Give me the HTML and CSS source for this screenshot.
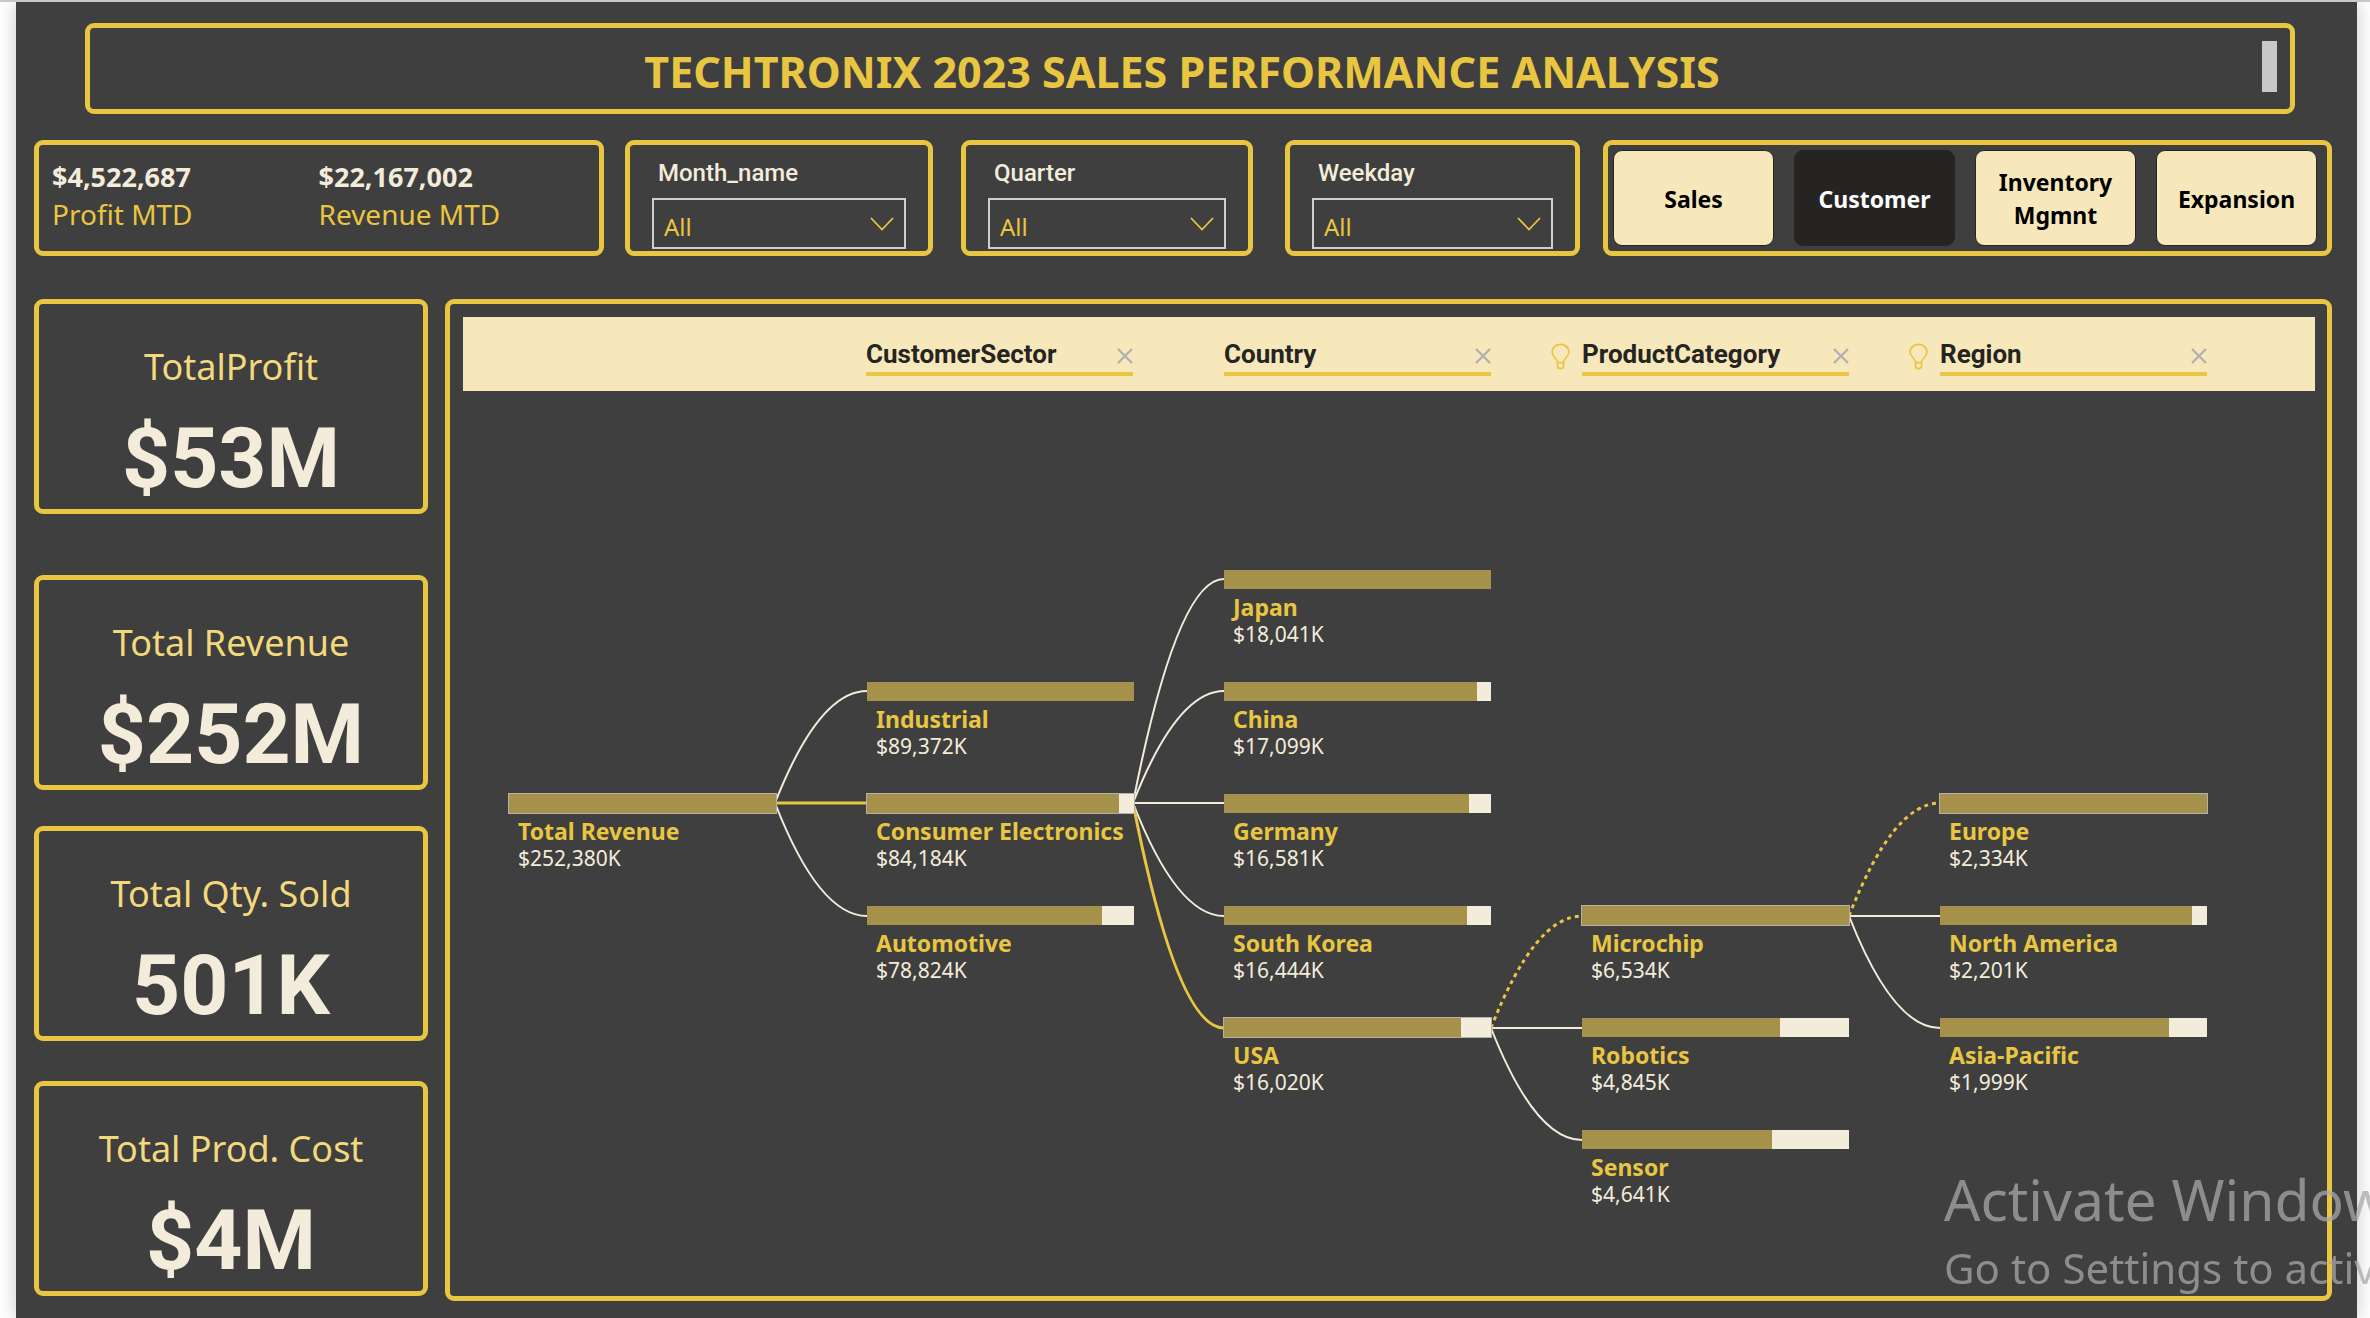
FILE: index.html
```html
<!DOCTYPE html>
<html lang="en">
<head>
<meta charset="utf-8">
<meta name="viewport" content="width=device-width, initial-scale=1">
<title>Techtronix 2023 Sales Performance Analysis</title>
<link rel="stylesheet" href="styles.css">
</head>
<body>
<svg class="sprite" aria-hidden="true">
  <symbol id="chevron" viewBox="0 0 24 14"><path d="M1 1 L12 12.500 L23 1" fill="none" stroke="currentColor" stroke-width="1.800"/></symbol>
  <symbol id="cross" viewBox="0 0 16 16"><path d="M1 1 L15 15 M15 1 L1 15" fill="none" stroke="currentColor" stroke-width="2.400"/></symbol>
  <symbol id="bulb" viewBox="0 0 20 28"><path d="M7 20.500 C7 16 1.200 14.500 1.200 9.500 C1.200 4.500 5 1.200 10 1.200 C15 1.200 18.800 4.500 18.800 9.500 C18.800 14.500 13 16 13 20.500 Z M6.800 20.500 V24 C6.800 26 8 26.800 10 26.800 C12 26.800 13.200 26 13.200 24 V20.500" fill="none" stroke="currentColor" stroke-width="1.800"/></symbol>
</svg>

<main class="report">
  <header class="box title">
    <h1>TECHTRONIX 2023 SALES PERFORMANCE ANALYSIS</h1>
    <span class="thumb"></span>
  </header>

  <div class="toolbar">
    <section class="box mtd">
      <div><p class="mtd-value">$4,522,687</p><p class="mtd-label">Profit MTD</p></div>
      <div><p class="mtd-value">$22,167,002</p><p class="mtd-label">Revenue MTD</p></div>
    </section>
    <div class="box filter month">
      <label for="month">Month_name</label>
      <div class="picker"><select id="month"><option>All</option></select><svg><use href="#chevron"/></svg></div>
    </div>
    <div class="box filter quarter">
      <label for="quarter">Quarter</label>
      <div class="picker"><select id="quarter"><option>All</option></select><svg><use href="#chevron"/></svg></div>
    </div>
    <div class="box filter weekday">
      <label for="weekday">Weekday</label>
      <div class="picker"><select id="weekday"><option>All</option></select><svg><use href="#chevron"/></svg></div>
    </div>
    <nav class="box pages">
      <button type="button">Sales</button>
      <button type="button" class="active" aria-current="page">Customer</button>
      <button type="button">Inventory Mgmnt</button>
      <button type="button">Expansion</button>
    </nav>
  </div>

  <div class="content">
    <aside class="kpis">
      <section class="box kpi"><h2>TotalProfit</h2><p>$53M</p></section>
      <section class="box kpi"><h2>Total Revenue</h2><p>$252M</p></section>
      <section class="box kpi"><h2>Total Qty. Sold</h2><p>501K</p></section>
      <section class="box kpi"><h2>Total Prod. Cost</h2><p>$4M</p></section>
    </aside>

    <section class="box panel">
      <div class="levels">
        <div class="level"><div class="level-name"><h3>CustomerSector</h3><button type="button" aria-label="Remove CustomerSector"><svg><use href="#cross"/></svg></button></div></div>
        <div class="level"><div class="level-name"><h3>Country</h3><button type="button" aria-label="Remove Country"><svg><use href="#cross"/></svg></button></div></div>
        <div class="level"><svg class="bulb"><use href="#bulb"/></svg><div class="level-name"><h3>ProductCategory</h3><button type="button" aria-label="Remove ProductCategory"><svg><use href="#cross"/></svg></button></div></div>
        <div class="level"><svg class="bulb"><use href="#bulb"/></svg><div class="level-name"><h3>Region</h3><button type="button" aria-label="Remove Region"><svg><use href="#cross"/></svg></button></div></div>
      </div>

      <div class="tree">
        <svg class="links" width="1852" height="900" aria-hidden="true">
          <g class="link">
            <path d="M312 412 Q356 300 404 300"/>
            <path d="M312 412 Q356 525 404 525"/>
            <path d="M670 412 Q714 188 761 188"/>
            <path d="M670 412 Q714 300 761 300"/>
            <path d="M670 412 H761"/>
            <path d="M670 412 Q714 525 761 525"/>
            <path d="M1028 637 H1119"/>
            <path d="M1028 637 Q1072 749 1119 749"/>
            <path d="M1386 525 H1477"/>
            <path d="M1386 525 Q1430 637 1477 637"/>
          </g>
          <g class="link chosen">
            <path d="M312 412 H404"/>
            <path d="M670 412 Q714 637 761 637"/>
          </g>
          <g class="link chosen suggested">
            <path d="M1028 637 Q1072 525 1119 525"/>
            <path d="M1386 525 Q1430 412 1477 412"/>
          </g>
        </svg>

        <div class="node c0 r2 selected"><div class="bar"><i style="width:100%"></i></div><h4>Total Revenue</h4><p>$252,380K</p></div>

        <div class="node c1 r1"><div class="bar"><i style="width:100%"></i></div><h4>Industrial</h4><p>$89,372K</p></div>
        <div class="node c1 r2 selected"><div class="bar"><i style="width:94.2%"></i></div><h4>Consumer Electronics</h4><p>$84,184K</p></div>
        <div class="node c1 r3"><div class="bar"><i style="width:88.2%"></i></div><h4>Automotive</h4><p>$78,824K</p></div>

        <div class="node c2 r0"><div class="bar"><i style="width:100%"></i></div><h4>Japan</h4><p>$18,041K</p></div>
        <div class="node c2 r1"><div class="bar"><i style="width:94.8%"></i></div><h4>China</h4><p>$17,099K</p></div>
        <div class="node c2 r2"><div class="bar"><i style="width:91.9%"></i></div><h4>Germany</h4><p>$16,581K</p></div>
        <div class="node c2 r3"><div class="bar"><i style="width:91.1%"></i></div><h4>South Korea</h4><p>$16,444K</p></div>
        <div class="node c2 r4 selected"><div class="bar"><i style="width:88.8%"></i></div><h4>USA</h4><p>$16,020K</p></div>

        <div class="node c3 r3 selected"><div class="bar"><i style="width:100%"></i></div><h4>Microchip</h4><p>$6,534K</p></div>
        <div class="node c3 r4"><div class="bar"><i style="width:74.2%"></i></div><h4>Robotics</h4><p>$4,845K</p></div>
        <div class="node c3 r5"><div class="bar"><i style="width:71%"></i></div><h4>Sensor</h4><p>$4,641K</p></div>

        <div class="node c4 r2 selected"><div class="bar"><i style="width:100%"></i></div><h4>Europe</h4><p>$2,334K</p></div>
        <div class="node c4 r3"><div class="bar"><i style="width:94.3%"></i></div><h4>North America</h4><p>$2,201K</p></div>
        <div class="node c4 r4"><div class="bar"><i style="width:85.6%"></i></div><h4>Asia-Pacific</h4><p>$1,999K</p></div>
      </div>
    </section>
  </div>
</main>

<div class="watermark"><p class="wm-title">Activate Windows</p><p class="wm-text">Go to Settings to activate Windows.</p></div>
</body>
</html>
```
FILE: styles.css
```css
:root {
  --gold: #e9c641;
  --cream: #f3ecda;
  --sand: #f7e8bb;
  --ink: #252423;
  --canvas: #3f3f3f;
  --ui: "Noto Sans", "Open Sans", sans-serif;
  --din: Roboto, "Noto Sans", sans-serif;
}

* { box-sizing: border-box; }

body {
  margin: 0;
  min-height: 100vh;
  display: flex;
  flex-direction: column;
  overflow-x: hidden;
  background: #fff;
  border-top: 2px solid #c8c8c8;
  font-family: var(--ui);
}

h1, h2, h3, h4, p { margin: 0; }

.sprite { display: none; }

.report {
  flex: 1;
  margin: 0 13px 0 16px;
  padding: 21px 25px 16px 18px;
  background: var(--canvas);
  box-shadow: 0 0 18px rgba(0, 0, 0, .22);
}

.box {
  border: 5px solid var(--gold);
  border-radius: 9px;
}

/* Title bar */
.title {
  display: flex;
  align-items: flex-start;
  min-height: 91px;
  margin: 0 37px 26px 51px;
  padding: 13px 13px 0 12px;
}

.title h1 {
  flex: 1;
  padding-top: 3px;
  font-size: 43px;
  line-height: 56px;
  font-weight: 700;
  text-align: center;
  color: var(--gold);
}

.thumb {
  width: 15px;
  height: 51px;
  background: #c8c8c8;
}

/* Figures, filters and page buttons */
.toolbar {
  display: grid;
  grid-template-columns: 570fr 21px 308fr 28px 292fr 32px 295fr 23px 729fr;
  min-height: 116px;
  margin-bottom: 43px;
}

.mtd {
  grid-column: 1;
  display: grid;
  grid-template-columns: 1fr 1fr;
  padding: 14px 14px 0 13px;
}

.mtd-value {
  font-size: 27px;
  line-height: 36px;
  font-weight: 700;
  color: var(--cream);
}

.mtd-label {
  font-size: 28px;
  line-height: 38px;
  color: var(--gold);
}

.month { grid-column: 3; }
.quarter { grid-column: 5; }
.weekday { grid-column: 7; }

.filter { padding: 14px 22px 0; }

.filter label {
  display: block;
  padding-left: 6px;
  font: 500 24px/28px var(--din);
  color: var(--cream);
}

.picker {
  display: grid;
  align-items: center;
  margin-top: 11px;
}

.picker select,
.picker svg { grid-area: 1 / 1; }

.picker select {
  appearance: none;
  width: 100%;
  height: 51px;
  padding: 6px 10px 0;
  border: 2px solid #cfcfcf;
  border-radius: 0;
  background: transparent;
  font: 24px/32px var(--ui);
  color: var(--gold);
}

.picker svg {
  justify-self: end;
  width: 24px;
  height: 14px;
  margin-right: 12px;
  color: var(--gold);
  pointer-events: none;
}

.pages {
  grid-column: 9;
  display: grid;
  grid-template-columns: repeat(4, 1fr);
  gap: 20px;
  padding: 5px 10px 5px 5px;
}

.pages button {
  padding: 2px 8px 0;
  border: 1px solid var(--ink);
  border-radius: 9px;
  background: var(--sand);
  font: 700 23px/33px var(--ui);
  color: #000;
}

.pages .active {
  background: var(--ink);
  color: #fff;
}

/* Cards beside the decomposition tree */
.content {
  display: grid;
  grid-template-columns: 394px 1fr;
  gap: 17px;
}

.kpis {
  display: flex;
  flex-direction: column;
  gap: 36px;
}

.kpi {
  height: 215px;
  padding-top: 38px;
  text-align: center;
}

.kpi:first-child { margin-bottom: 25px; }
.kpi:last-child { margin-top: 4px; }

.kpi h2 {
  font-size: 36px;
  line-height: 50px;
  font-weight: 400;
  color: #f3d97e;
}

.kpi p {
  margin-top: 19px;
  font: 700 84px/96px var(--din);
  color: var(--cream);
}

.panel {
  min-width: 0;
  padding: 13px 12px 0 13px;
}

.levels {
  display: grid;
  grid-template-columns: repeat(4, 298px);
  gap: 60px;
  height: 74px;
  padding: 20px 0 0 372px;
  background: var(--sand);
}

.level {
  display: flex;
  justify-content: flex-end;
  align-items: flex-start;
}

.bulb {
  width: 19px;
  height: 27px;
  margin: 6px 12px 0 0;
  color: var(--gold);
}

.level-name {
  display: flex;
  justify-content: space-between;
  align-items: center;
  width: 267px;
  border-bottom: 4px solid var(--gold);
}

.level-name h3 {
  font: 700 26px/35px var(--din);
  color: var(--ink);
}

.level-name button {
  display: flex;
  padding: 3px 0 0;
  border: 0;
  background: none;
  color: #b3b0ad;
}

.level-name button svg {
  width: 16px;
  height: 16px;
}

/* Decomposition tree: nodes on a free canvas, 358px apart by level */
.tree {
  position: relative;
  height: 905px;
}

.links {
  position: absolute;
  inset: 0 auto auto 0;
}

.link {
  fill: none;
  stroke: var(--cream);
  stroke-width: 2;
}

.chosen {
  stroke: var(--gold);
  stroke-width: 3;
}

.suggested { stroke-dasharray: 4 4; }

.node {
  position: absolute;
  width: 267px;
}

.c0 { left: 46px; }
.c1 { left: 404px; }
.c2 { left: 761px; }
.c3 { left: 1119px; }
.c4 { left: 1477px; }

.r0 { top: 179px; }
.r1 { top: 291px; }
.r2 { top: 403px; }
.r3 { top: 515px; }
.r4 { top: 627px; }
.r5 { top: 739px; }

.bar {
  height: 19px;
  background: var(--cream);
}

.bar i {
  display: block;
  height: 100%;
  background: #a5914a;
}

.selected .bar { outline: 1px solid #b3b0ad; }

.node h4 {
  margin-top: 4px;
  padding-left: 9px;
  font-size: 23px;
  line-height: 28px;
  font-weight: 700;
  white-space: nowrap;
  color: var(--gold);
}

.node p {
  padding-left: 9px;
  font-size: 21px;
  line-height: 26px;
  color: var(--cream);
}

/* System notice over the lower right corner */
.watermark {
  position: fixed;
  right: 0;
  bottom: 20px;
  width: 426px;
  overflow: hidden;
  white-space: nowrap;
  color: rgba(168, 168, 168, .75);
  pointer-events: none;
}

.wm-title {
  font-size: 57px;
  line-height: 77px;
}

.wm-text {
  font-size: 42px;
  line-height: 60px;
}
```
